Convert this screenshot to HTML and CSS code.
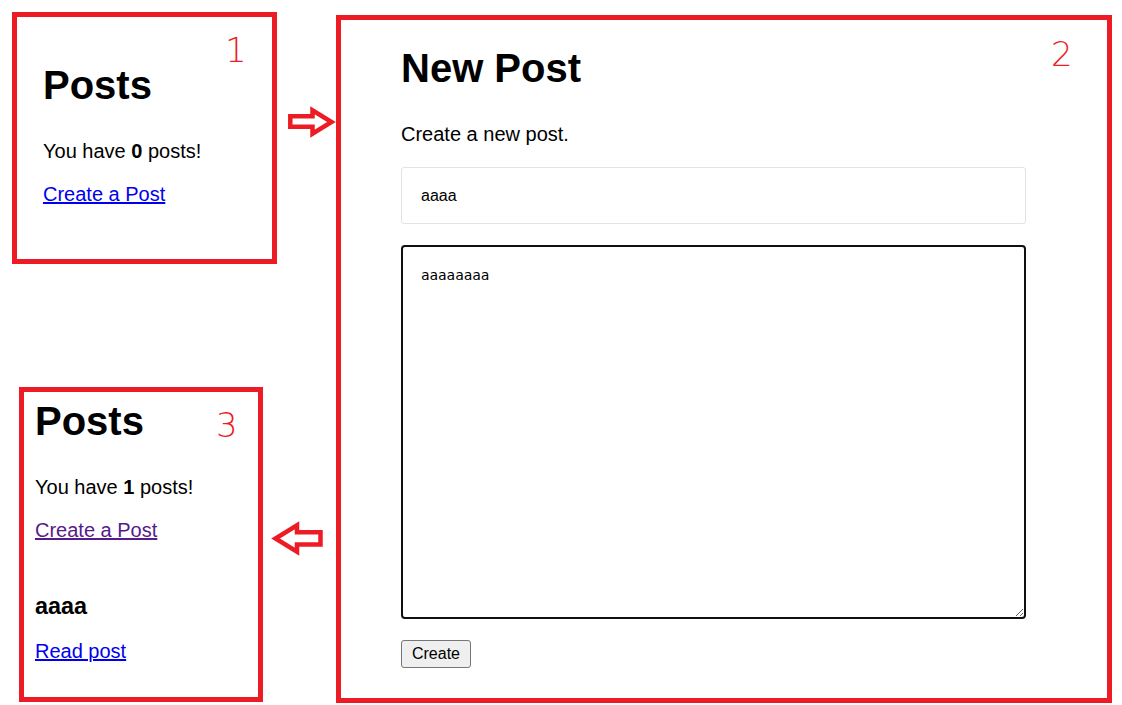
FILE: index.html
```html
<!DOCTYPE html>
<html lang="en">
<head>
<meta charset="utf-8">
<title>Posts flow</title>
<link rel="stylesheet" href="styles.css">
</head>
<body>
<div class="canvas">
  <section class="panel panel-list1">
    <h1>Posts</h1>
    <p>You have <b>0</b> posts!</p>
    <p><a href="#new">Create a Post</a></p>
  </section>

  <section class="panel panel-new">
    <h1>New Post</h1>
    <p class="lead">Create a new post.</p>
    <form class="post-form">
      <input class="title-input" type="text" value="aaaa">
      <textarea class="body-input">aaaaaaaa</textarea>
      <button class="create-btn" type="button">Create</button>
    </form>
  </section>

  <section class="panel panel-list2">
    <h1>Posts</h1>
    <p>You have <b>1</b> posts!</p>
    <p><a class="visited" href="#new">Create a Post</a></p>
    <h3>aaaa</h3>
    <p><a href="#post">Read post</a></p>
  </section>

  <span class="num num-1">1</span>
  <span class="num num-2">2</span>
  <span class="num num-3">3</span>

  <svg class="arrow arrow-right" width="60" height="45" viewBox="280 100 60 45">
    <polygon points="290.3,116.3 312.5,116.3 312.5,110.3 331.5,122 312.5,133.7 312.5,126.7 290.3,126.7"/>
  </svg>
  <svg class="arrow arrow-left" width="60" height="45" viewBox="268 518 60 45">
    <polygon points="320.5,532.3 297,532.3 297,525.3 275.5,538.5 297,551.7 297,544.4 320.5,544.4"/>
  </svg>
</div>
</body>
</html>
```

FILE: styles.css
```css
body {
  margin: 0;
  background: #ffffff;
  font-family: "Liberation Sans", Arial, sans-serif;
  color: #000000;
}

.canvas {
  position: relative;
  width: 1122px;
  height: 705px;
  overflow: hidden;
  background: #ffffff;
}

.panel {
  position: absolute;
  box-sizing: border-box;
  border: 5px solid #ed1c24;
  background: #ffffff;
}

.panel-list1 {
  left: 12px;
  top: 12px;
  width: 265px;
  height: 252px;
  padding: 45px 0 0 26px;
}

.panel-new {
  left: 336px;
  top: 15px;
  width: 776px;
  height: 688px;
  padding: 25px 0 0 60px;
}

.panel-list2 {
  left: 19px;
  top: 387px;
  width: 244px;
  height: 315px;
  padding: 6px 0 0 11px;
}

h1 {
  font-size: 40px;
  line-height: 46px;
  font-weight: bold;
  margin: 0 0 32px;
}

p {
  font-size: 20px;
  line-height: 23px;
  margin: 0 0 20px;
}

h3 {
  font-size: 23.4px;
  line-height: 27px;
  font-weight: bold;
  margin: 51px 0 20px;
}

a {
  color: #0000ee;
  text-decoration: underline;
}

a.visited {
  color: #551a8b;
}

.lead {
  margin-bottom: 21px;
}

.post-form {
  display: flex;
  flex-direction: column;
  align-items: flex-start;
  gap: 21px;
  width: 625px;
}

.title-input {
  box-sizing: border-box;
  width: 625px;
  height: 57px;
  margin: 0;
  padding: 0 19px;
  border: 1px solid #e3e3e3;
  border-radius: 3px;
  font-family: "Liberation Sans", Arial, sans-serif;
  font-size: 16px;
  color: #000000;
  background: #ffffff;
  outline: none;
}

.body-input {
  box-sizing: border-box;
  width: 625px;
  height: 374px;
  margin: 0;
  padding: 20px 18px;
  border: 2px solid #101010;
  border-radius: 4px;
  font-family: "DejaVu Sans Mono", "Liberation Mono", monospace;
  font-size: 14.2px;
  line-height: 17px;
  color: #000000;
  background: #ffffff;
  outline: none;
  resize: both;
}

.create-btn {
  box-sizing: border-box;
  width: 70px;
  height: 28px;
  margin: 0;
  padding: 0 9px;
  border: 1px solid #767676;
  border-radius: 3px;
  background: #efefef;
  font-family: "Liberation Sans", Arial, sans-serif;
  font-size: 16px;
  color: #000000;
}

.num {
  position: absolute;
  color: #ed1c24;
  font-family: "DejaVu Sans", "Open Sans", sans-serif;
  font-weight: 200;
  font-size: 34px;
  line-height: 1;
}

.num-1 { left: 225px; top: 33px; }
.num-2 { left: 1051px; top: 37px; }
.num-3 { left: 216px; top: 408px; }

.arrow {
  position: absolute;
  overflow: visible;
}

.arrow polygon {
  fill: none;
  stroke: #ed1c24;
  stroke-width: 4.5;
  stroke-linejoin: miter;
}

.arrow-right { left: 280px; top: 100px; }
.arrow-left { left: 268px; top: 518px; }
```
